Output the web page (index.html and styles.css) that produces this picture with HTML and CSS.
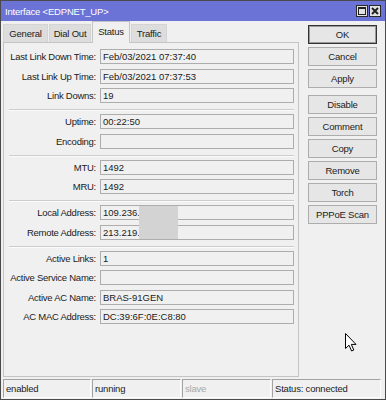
FILE: index.html
```html
<!DOCTYPE html>
<html>
<head>
<meta charset="utf-8">
<title>Interface</title>
<link rel="stylesheet" href="styles.css">
</head>
<body>
<div class="window">
  <div class="titlebar">
    <span class="title">Interface &lt;EDPNET_UP&gt;</span>
    <div class="tbtns">
      <span class="tbtn"><svg width="10" height="10" viewBox="0 0 10 10"><rect x="1.5" y="1.5" width="7" height="7" fill="none" stroke="#222" stroke-width="1"/><rect x="1" y="1" width="8" height="2" fill="#222"/></svg></span>
      <span class="tbtn"><svg width="10" height="10" viewBox="0 0 10 10"><path d="M2 2 L8 8 M8 2 L2 8" stroke="#222" stroke-width="2"/></svg></span>
    </div>
  </div>
  <div class="main">
    <div class="left">
      <div class="tabs">
        <div class="tab t-general">General</div>
        <div class="tab t-dial">Dial Out</div>
        <div class="tab active t-status">Status</div>
        <div class="tab t-traffic">Traffic</div>
      </div>
      <div class="page">
        <div class="row"><span class="lbl">Last Link Down Time:</span><span class="fld">Feb/03/2021 07:37:40</span></div>
        <div class="row"><span class="lbl">Last Link Up Time:</span><span class="fld">Feb/03/2021 07:37:53</span></div>
        <div class="row"><span class="lbl">Link Downs:</span><span class="fld">19</span></div>
        <div class="sep"></div>
        <div class="row"><span class="lbl">Uptime:</span><span class="fld">00:22:50</span></div>
        <div class="row"><span class="lbl">Encoding:</span><span class="fld"></span></div>
        <div class="sep"></div>
        <div class="row"><span class="lbl">MTU:</span><span class="fld">1492</span></div>
        <div class="row"><span class="lbl">MRU:</span><span class="fld">1492</span></div>
        <div class="sep"></div>
        <div class="row"><span class="lbl">Local Address:</span><span class="fld">109.236.</span></div>
        <div class="row"><span class="lbl">Remote Address:</span><span class="fld">213.219.</span></div>
        <div class="sep"></div>
        <div class="row"><span class="lbl">Active Links:</span><span class="fld">1</span></div>
        <div class="row"><span class="lbl">Active Service Name:</span><span class="fld"></span></div>
        <div class="row"><span class="lbl">Active AC Name:</span><span class="fld">BRAS-91GEN</span></div>
        <div class="row"><span class="lbl">AC MAC Address:</span><span class="fld">DC:39:6F:0E:C8:80</span></div>
        <div class="redact"></div>
      </div>
    </div>
    <div class="buttons">
      <div class="btn default">OK</div>
      <div class="btn">Cancel</div>
      <div class="btn">Apply</div>
      <div class="btn group">Disable</div>
      <div class="btn">Comment</div>
      <div class="btn">Copy</div>
      <div class="btn">Remove</div>
      <div class="btn">Torch</div>
      <div class="btn">PPPoE Scan</div>
    </div>
  </div>
  <div class="statusbar">
    <div class="cell c1">enabled</div>
    <div class="cell c2">running</div>
    <div class="cell c3 dim">slave</div>
    <div class="cell c4">Status: connected</div>
  </div>
  <svg class="cursor" width="13" height="19" viewBox="0 0 13 19"><path d="M0.5 0.5 L0.5 15.5 L4 12.2 L6.6 18 L8.8 17 L6.3 11.4 L11 11.4 Z" fill="#fff" stroke="#000" stroke-width="1" stroke-linejoin="miter"/></svg>
</div>
</body>
</html>
```

FILE: styles.css
```css
* { box-sizing: border-box; }
html, body { margin: 0; padding: 0; background: #f0f0f0; }
body {
  font-family: "Liberation Sans", Arial, sans-serif;
  font-size: 9.5px;
  color: #1b1b1b;
}
.window {
  position: relative;
  width: 386px;
  height: 400px;
  border: 1px solid #4a4a4a;
  background: #f0f0f0;
  display: flex;
  flex-direction: column;
  overflow: hidden;
}
.titlebar {
  flex: none;
  height: 20px;
  background: #6b73d6;
  color: #fff;
  display: flex;
  align-items: center;
  padding: 0 4px 0 4px;
}
.title { letter-spacing: -0.2px; }
.tbtns { margin-left: auto; display: flex; gap: 1px; }
.tbtn {
  width: 12px;
  height: 12px;
  background: #e2e2e2;
  border: 1px solid #2a2a2a;
  display: flex;
  align-items: center;
  justify-content: center;
}
.main {
  flex: none;
  height: 356px;
  display: flex;
  padding-left: 2px;
}
.left {
  width: 296px;
  display: flex;
  flex-direction: column;
}
.tabs {
  flex: none;
  height: 21px;
  display: flex;
  align-items: flex-end;
}
.tab {
  height: 18px;
  margin-right: 1px;
  background: #dddddd;
  border: 1px solid #d4d4d4;
  border-bottom: none;
  text-align: center;
  line-height: 17px;
  letter-spacing: -0.2px;
}
.tab.active {
  position: relative;
  z-index: 1;
  height: 22px;
  margin-bottom: -1px;
  background: #f0f0f0;
  border-color: #c4c4c4;
  line-height: 20px;
}
.t-general { width: 45px; }
.t-dial { width: 42px; }
.t-status { width: 38px; }
.t-traffic { width: 36px; }
.page {
  position: relative;
  flex: 1;
  border: 1px solid #c4c4c4;
  padding: 4px 4px 0 5px;
}
.row {
  height: 19.5px;
  display: flex;
  align-items: center;
}
.lbl {
  width: 87px;
  text-align: right;
  white-space: nowrap;
  letter-spacing: -0.25px;
}
.fld {
  flex: 1;
  margin-left: 4px;
  height: 15px;
  border: 1px solid #adadad;
  background: #f0f0f0;
  padding-left: 2px;
  line-height: 13px;
  white-space: nowrap;
}
.sep {
  margin: 3.5px 0 1px;
  border-top: 1px solid #cdcdcd;
  border-bottom: 1px solid #fbfbfb;
}
.redact {
  position: absolute;
  left: 135px;
  top: 163px;
  width: 39px;
  height: 33px;
  background: #d3d3d3;
}
.buttons {
  margin-left: 9px;
  width: 69px;
  padding-top: 4px;
  display: flex;
  flex-direction: column;
  gap: 3px;
}
.btn {
  height: 19px;
  border: 1px solid #adadad;
  background: #e6e6e6;
  text-align: center;
  line-height: 17px;
  letter-spacing: -0.2px;
  white-space: nowrap;
}
.btn.default {
  border-color: #333;
  box-shadow: inset 0 0 0 1px #9a9a9a;
}
.btn.group { margin-top: 4px; }
.statusbar {
  flex: none;
  margin-top: 2px;
  height: 19px;
  display: flex;
  gap: 1px;
  padding-left: 2px;
}
.cell {
  height: 19px;
  border: 1px solid;
  border-color: #a3a3a3 #fcfcfc #fcfcfc #a3a3a3;
  padding-left: 2px;
  line-height: 17px;
  letter-spacing: -0.2px;
  white-space: nowrap;
}
.c1 { width: 88px; }
.c2 { width: 89px; }
.c3 { width: 89px; }
.c4 { width: 109px; }
.dim { color: #a8a8a8; }
.cursor {
  position: absolute;
  left: 344px;
  top: 332px;
}
```
